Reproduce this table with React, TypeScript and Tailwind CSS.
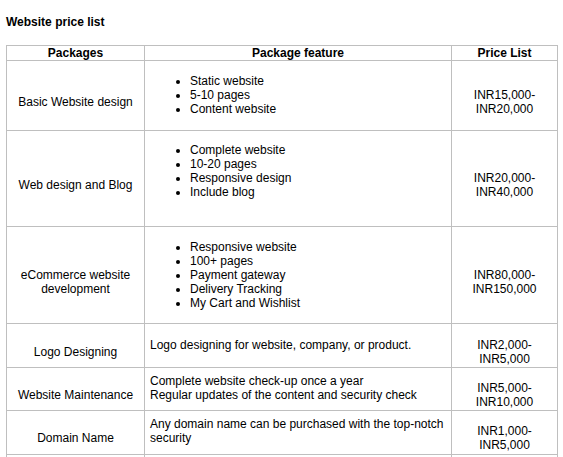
import React from "react";

type Row = {
  name: React.ReactNode;
  feature: React.ReactNode;
  price: React.ReactNode;
  namePad: string;
  featPad: string;
};

const cell = "bg-white flex items-center";

function Bullets({ items }: { items: string[] }) {
  return (
    <ul className="list-disc pl-10 m-0">
      {items.map((t) => (
        <li key={t}>{t}</li>
      ))}
    </ul>
  );
}

const rows: Row[] = [
  {
    name: "Basic Website design",
    feature: <Bullets items={["Static website", "5-10 pages", "Content website"]} />,
    price: (
      <>
        INR15,000-
        <br />
        INR20,000
      </>
    ),
    namePad: "pt-[12px]",
    featPad: "pb-[2px]",
  },
  {
    name: "Web design and Blog",
    feature: (
      <Bullets items={["Complete website", "10-20 pages", "Responsive design", "Include blog"]} />
    ),
    price: (
      <>
        INR20,000-
        <br />
        INR40,000
      </>
    ),
    namePad: "pt-[12px]",
    featPad: "pb-[16px]",
  },
  {
    name: (
      <>
        eCommerce website
        <br />
        development
      </>
    ),
    feature: (
      <Bullets
        items={[
          "Responsive website",
          "100+ pages",
          "Payment gateway",
          "Delivery Tracking",
          "My Cart and Wishlist",
        ]}
      />
    ),
    price: (
      <>
        INR80,000-
        <br />
        INR150,000
      </>
    ),
    namePad: "pt-[13px]",
    featPad: "pb-[1px]",
  },
  {
    name: "Logo Designing",
    feature: <p>Logo designing for website, company, or product.</p>,
    price: (
      <>
        INR2,000-
        <br />
        INR5,000
      </>
    ),
    namePad: "pt-[12px]",
    featPad: "pb-[2px]",
  },
  {
    name: "Website Maintenance",
    feature: (
      <p>
        Complete website check-up once a year
        <br />
        Regular updates of the content and security check
      </p>
    ),
    price: (
      <>
        INR5,000-
        <br />
        INR10,000
      </>
    ),
    namePad: "pt-[11px]",
    featPad: "pb-[3px]",
  },
  {
    name: "Domain Name",
    feature: (
      <p>
        Any domain name can be purchased with the top-notch
        <br />
        security
      </p>
    ),
    price: (
      <>
        INR1,000-
        <br />
        INR5,000
      </>
    ),
    namePad: "pt-[10px]",
    featPad: "pb-[4px]",
  },
];

export default function App() {
  return (
    <div className="bg-white min-h-screen text-black text-[12px] leading-[14px] [font-family:'Liberation_Sans',Arial,sans-serif]">
      <p className="pt-[15px] pl-[6px] font-bold">Website price list</p>
      <div className="mt-[16px] ml-[6px] w-fit grid grid-cols-[137px_306px_105px] grid-rows-[14px_69px_95px_96px_43px_42px_43px_40px] gap-px bg-[#bfbfbf] border border-[#bfbfbf]">
        <div className={`${cell} justify-center font-bold`}>Packages</div>
        <div className={`${cell} justify-center font-bold`}>Package feature</div>
        <div className={`${cell} justify-center font-bold`}>Price List</div>
        {rows.map((r, i) => (
          <React.Fragment key={i}>
            <div className={`${cell} justify-center text-center px-[4px] ${r.namePad}`}>
              <span>{r.name}</span>
            </div>
            <div className={`${cell} pl-[5px] pr-[5px] ${r.featPad}`}>{r.feature}</div>
            <div className={`${cell} justify-center text-center ${r.namePad}`}>
              <span>{r.price}</span>
            </div>
          </React.Fragment>
        ))}
        <div className="bg-white" />
        <div className="bg-white" />
        <div className="bg-white" />
      </div>
    </div>
  );
}
